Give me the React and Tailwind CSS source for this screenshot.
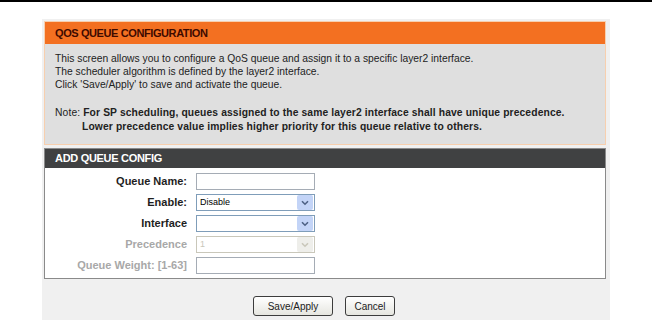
import React from "react";

function Chevron({ disabled }) {
  return (
    <div
      className={`flex h-[15px] w-[16px] items-center justify-center rounded-[2px] ${
        disabled ? "bg-[#eeeeea]" : "bg-[#c3d4f7]"
      }`}
    >
      <svg width="8" height="6" viewBox="0 0 8 6">
        <path
          d="M1 1.2 L4 4.2 L7 1.2"
          fill="none"
          stroke={disabled ? "#c9c7ba" : "#4d6185"}
          strokeWidth="1.6"
        />
      </svg>
    </div>
  );
}

function Input() {
  return <div className="h-[17px] w-[119px] border border-[#a5acb5] bg-white" />;
}

function Select({ value, disabled }) {
  return (
    <div
      className={`flex h-[17px] w-[119px] items-center justify-between border pl-[3px] pr-[1px] ${
        disabled ? "border-[#c9c7ba] bg-white text-[#c9c7ba]" : "border-[#7f9db9] bg-white text-[#000]"
      }`}
    >
      <span className="text-[9px] leading-none">{value}</span>
      <Chevron disabled={disabled} />
    </div>
  );
}

function Row({ label, disabled, children }) {
  return (
    <div className="flex h-[21px] items-center">
      <div
        className={`w-[151px] pr-[9px] text-right text-[11px] font-bold ${
          disabled ? "text-[#a8a8a8]" : "text-[#1e1e1e]"
        }`}
      >
        {label}
      </div>
      {children}
    </div>
  );
}

export default function App() {
  return (
    <div
      className="h-[320px] w-[652px] overflow-hidden bg-white"
      style={{ fontFamily: '"Liberation Sans", Arial, sans-serif' }}
    >
      <div className="h-[2px] w-full bg-black" />
      <div className="ml-[42px] mt-[17px] h-[301px] w-[568px] bg-[#f0f0f0] pl-[2px] pt-[2px]">
        <div className="w-[562px] border border-[#f7cfae] bg-[#dfdfdf]">
          <div className="flex h-[22px] items-center bg-[#f37021] pl-[10px] text-[11px] font-bold tracking-[-0.4px] text-[#3d0a00]">
            QOS QUEUE CONFIGURATION
          </div>
          <div className="px-[10px] pb-[10px] pt-[8px] text-[10.3px] leading-[13px] text-[#222]">
            <div>This screen allows you to configure a QoS queue and assign it to a specific layer2 interface.</div>
            <div>The scheduler algorithm is defined by the layer2 interface.</div>
            <div>Click 'Save/Apply' to save and activate the queue.</div>
            <div className="h-[15px]" />
            <div className="font-bold tracking-[0.12px] leading-[14px]">
              <span className="font-normal">Note: </span>For SP scheduling, queues assigned to the same layer2 interface shall have unique precedence.
            </div>
            <div className="pl-[27px] font-bold tracking-[0.12px] leading-[14px]">
              Lower precedence value implies higher priority for this queue relative to others.
            </div>
          </div>
        </div>

        <div className="mt-[3px] w-[562px] border border-[#8a8a8a] bg-white">
          <div className="flex h-[19px] items-center bg-[#404142] pl-[10px] text-[11px] font-bold tracking-[-0.3px] text-white">
            ADD QUEUE CONFIG
          </div>
          <div className="pb-[2px] pt-[3px]">
            <Row label="Queue Name:">
              <Input />
            </Row>
            <Row label="Enable:">
              <Select value="Disable" />
            </Row>
            <Row label="Interface">
              <Select value="" />
            </Row>
            <Row label="Precedence" disabled>
              <Select value="1" disabled />
            </Row>
            <Row label="Queue Weight: [1-63]" disabled>
              <Input />
            </Row>
          </div>
        </div>

        <div className="mt-[17px] flex justify-center gap-[12px] pr-[6px]">
          <button className="h-[20px] w-[80px] rounded-[3px] border border-[#3c3c3c] bg-gradient-to-b from-white to-[#e6e6e0] text-[10px] text-[#222]">
            Save/Apply
          </button>
          <button className="h-[20px] w-[50px] rounded-[3px] border border-[#3c3c3c] bg-gradient-to-b from-white to-[#e6e6e0] text-[10px] text-[#222]">
            Cancel
          </button>
        </div>
      </div>
    </div>
  );
}
